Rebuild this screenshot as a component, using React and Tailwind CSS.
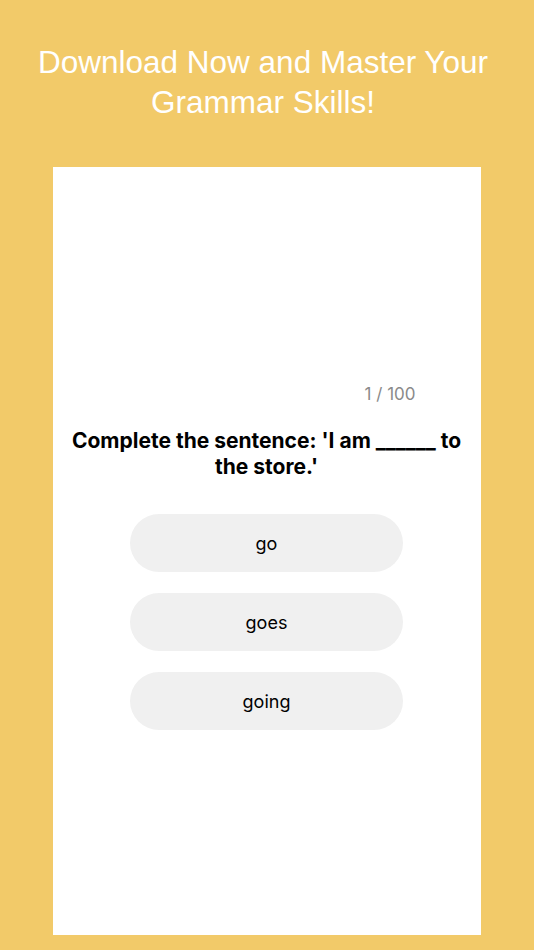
const OPTIONS = ['go', 'goes', 'going']

export default function App() {
  return (
    <div className="w-[534px] h-[950px] bg-[#f2ca69] flex flex-col items-center overflow-hidden">
      {/* Headline */}
      <h1
        className="mt-[42px] mr-2 text-center text-white text-[31.5px] leading-[40px] px-6"
        style={{ fontFamily: '"Liberation Sans", Arial, sans-serif' }}
      >
        Download Now and Master Your
        <br />
        Grammar Skills!
      </h1>

      {/* Phone screen */}
      <div
        className="mt-[45px] mr-px w-[428px] h-[768px] bg-white flex flex-col items-center"
        style={{ fontFamily: 'Inter, "Noto Sans", sans-serif' }}
      >
        <div className="w-full flex justify-end pr-[65px] pt-[215px]">
          <span className="text-[17px] leading-6 text-[#8a8a8a]">1 / 100</span>
        </div>

        <p className="mt-[22px] px-[12px] text-center text-[21px] leading-[26px] font-bold text-black">
          Complete the sentence: 'I am ______ to the store.'
        </p>

        <div className="mt-[34px] flex flex-col gap-[21px]">
          {OPTIONS.map((opt) => (
            <button
              key={opt}
              className="w-[273px] h-[58px] rounded-full bg-[#f0f0f0] text-[18px] text-black flex items-center justify-center"
            >
              {opt}
            </button>
          ))}
        </div>
      </div>
    </div>
  )
}
